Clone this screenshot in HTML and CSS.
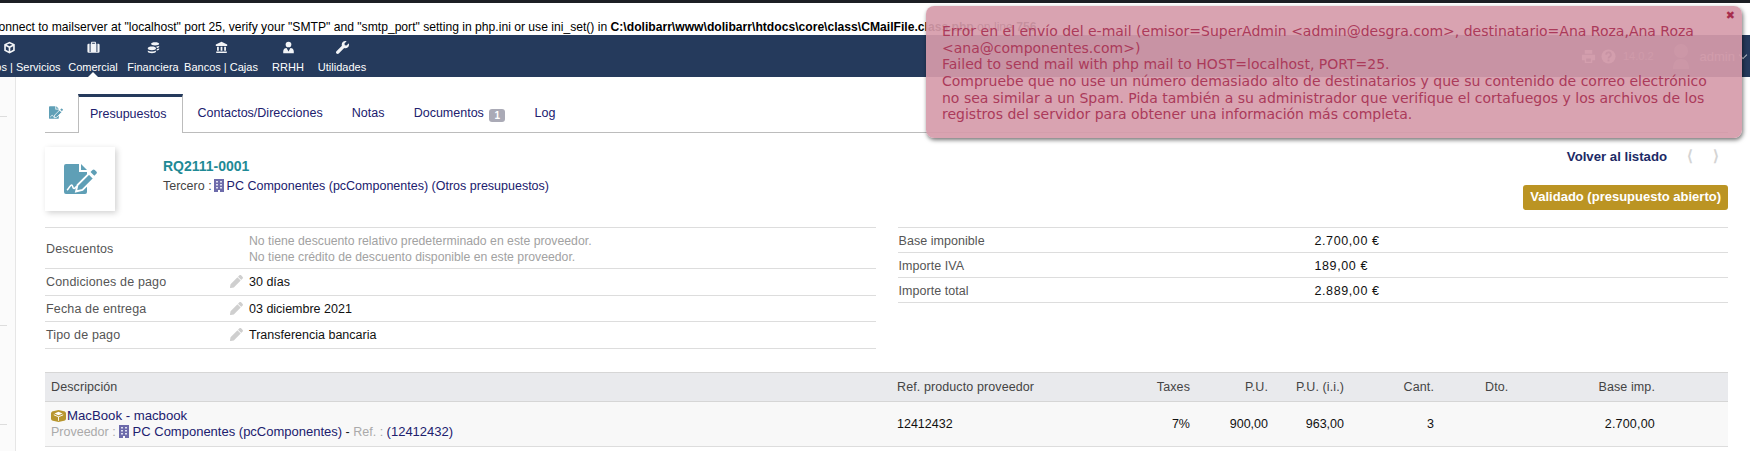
FILE: index.html
```html
<!DOCTYPE html>
<html lang="es">
<head>
<meta charset="utf-8">
<title>RQ2111-0001</title>
<link rel="stylesheet" href="styles.css">
</head>
<body>
<svg class="defs" width="0" height="0" aria-hidden="true">
  <symbol id="i-file" viewBox="0 0 33 30">
    <path fill="currentColor" d="M0 2a2 2 0 0 1 2-2h13v8h8v20a2 2 0 0 1-2 2H2a2 2 0 0 1-2-2z"/>
    <path fill="currentColor" d="M17 0l6 6h-6z"/>
    <path fill="none" stroke="#fff" stroke-width="1.6" d="M3 26c2-1 3-5 4.500-5s1 3.500 2.500 3.500 1.500-2 3-2 1.500 2 4 2"/>
    <path fill="currentColor" stroke="#fff" stroke-width="1.800" d="M12 27.500l1.500-6.500L25 9.500l5 5-11.500 11.500z"/>
    <path fill="currentColor" d="M26.500 8l2-2a1.600 1.600 0 0 1 2.300 0l1.500 1.500a1.600 1.600 0 0 1 0 2.300l-2 2z"/>
  </symbol>
  <symbol id="i-build" viewBox="0 0 10 13">
    <path fill="currentColor" d="M0 0h10v13H6v-2H4v2H0z"/>
    <path fill="#dfe0f0" d="M2 2h2v1.500H2zM6 2h2v1.500H6zM2 5h2v1.500H2zM6 5h2v1.500H6zM2 8h2v1.500H2zM6 8h2v1.500H6z"/>
  </symbol>
  <symbol id="i-pencil" viewBox="0 0 512 512">
    <path fill="currentColor" d="M497.900 142.100l-46.100 46.100c-4.700 4.700-12.300 4.700-17 0l-111-111c-4.700-4.700-4.700-12.300 0-17l46.100-46.100c18.700-18.700 49.100-18.700 67.900 0l60.100 60.100c18.800 18.700 18.800 49.100 0 67.900zM284.200 99.800L21.600 362.400.4 483.900c-2.900 16.400 11.400 30.600 27.800 27.800l121.500-21.300 262.600-262.600c4.700-4.700 4.700-12.300 0-17l-111-111c-4.800-4.700-12.400-4.700-17.100 0z"/>
  </symbol>
  <symbol id="i-cube" viewBox="0 0 15 12">
    <path fill="currentColor" d="M7.500 0L13 1.200c1.300.3 2 1.300 2 2.300v5c0 1-.7 2-2 2.300L7.500 12 2 10.800C.7 10.500 0 9.500 0 8.500v-5c0-1 .7-2 2-2.300z"/>
    <path fill="#fff" d="M7.500 1.800L11.500 3.500 7.500 5.200 3.500 3.500z"/>
    <path fill="none" stroke="#fff" stroke-width=".9" d="M2.800 4.800L7.500 6.800l4.700-2M7.500 6.800v4"/>
  </symbol>
</svg>

<div class="topline"></div>
<div class="warn">Warning: mail(): Failed to connect to mailserver at "localhost" port 25, verify your "SMTP" and "smtp_port" setting in php.ini or use ini_set() in <b>C:\dolibarr\www\dolibarr\htdocs\core\class\CMailFile.class.php</b> on line <b>756</b></div>

<nav class="topnav">
  <a class="navitem w1"><svg class="navicon" viewBox="0 0 16 16"><path fill="currentColor" d="M8 1l6.500 3v8L8 15.500 1.500 12V4zM8 3L4.500 4.700 8 6.400l3.500-1.700zM3.500 6.500v4.300L7 12.700V8.200zM12.500 6.500L9 8.200v4.500l3.500-1.900z"/></svg><span>Productos | Servicios</span></a>
  <a class="navitem w2 current"><svg class="navicon" viewBox="0 0 16 16"><path fill="currentColor" fill-rule="evenodd" d="M5 3.500V2a1 1 0 0 1 1-1h4a1 1 0 0 1 1 1v1.500h3a1.500 1.500 0 0 1 1.500 1.500v8a1.500 1.500 0 0 1-1.500 1.500H2A1.500 1.500 0 0 1 .5 13V5A1.500 1.500 0 0 1 2 3.500zM6.300 2.300v1.200h3.400V2.300zM3.200 3.500v10h1.200v-10zM11.600 3.500v10h1.200v-10z"/></svg><span>Comercial</span></a>
  <a class="navitem w3"><svg class="navicon" viewBox="0 0 16 16"><path fill="currentColor" d="M1 8.500c0-1 2.300-1.800 5-1.800s5 .8 5 1.800v1c0 1-2.300 1.800-5 1.800s-5-.8-5-1.800zM1 11.800c1 .8 3 1.200 5 1.200s4-.4 5-1.200v1.500c0 1-2.300 1.700-5 1.700s-5-.7-5-1.700zM5 3.500C5 2.300 7.200 1.500 10 1.500s5 .8 5 2-2.200 2-5 2-5-.8-5-2zM11.500 6.700c1.500-.1 2.700-.5 3.500-1v1.300c0 .8-1.300 1.500-3 1.700zM12 9.800c1.300-.2 2.400-.5 3-1v1.500c0 .7-1.200 1.300-3 1.600z"/></svg><span>Financiera</span></a>
  <a class="navitem w4"><svg class="navicon" viewBox="0 0 16 16"><path fill="currentColor" d="M8 1l7 3.200V6H1V4.200zM2.500 7h2.200v5H2.500zM6.900 7h2.200v5H6.900zM11.300 7h2.200v5h-2.200zM1.500 13h13v1.800h-13z"/></svg><span>Bancos | Cajas</span></a>
  <a class="navitem w5"><svg class="navicon" viewBox="0 0 16 16"><circle cx="8" cy="4.300" r="3.500" fill="currentColor"/><path fill="currentColor" d="M1.500 15v-2.500C1.500 10 3.500 8.500 5.600 8.500L8 13l2.400-4.500c2.100 0 4.100 1.500 4.100 4V15z"/></svg><span>RRHH</span></a>
  <a class="navitem w6"><svg class="navicon" viewBox="0 0 512 512"><path fill="currentColor" d="M507.730 109.100c-2.240-9.030-13.540-12.090-20.120-5.510l-74.360 74.360-67.880-11.310-11.310-67.880 74.360-74.360c6.620-6.620 3.430-17.900-5.660-20.160-47.380-11.740-99.550.91-136.580 37.930-39.640 39.640-50.550 97.100-34.050 147.200L18.740 402.760c-24.990 24.990-24.990 65.510 0 90.500 24.990 24.990 65.510 24.990 90.500 0l213.210-213.210c50.120 16.710 107.470 5.680 147.370-34.220 37.070-37.070 49.700-89.320 37.910-136.730z"/></svg><span>Utilidades</span></a>
  <div class="navright">
    <svg class="navmini" viewBox="0 0 16 16"><path fill="currentColor" fill-rule="evenodd" d="M4 1h8v4H4zM1 6h14v6h-3v3H4v-3H1zM5.500 10v3.500h5V10z"/></svg>
    <svg class="navmini" viewBox="0 0 16 16"><circle cx="8" cy="8" r="7.500" fill="currentColor"/><path fill="none" stroke="#253a5c" stroke-width="2" d="M5.500 6a2.500 2.500 0 1 1 3.500 2.300c-.7.300-1 .8-1 1.700"/><path fill="#253a5c" d="M7 11.200h2v2H7z"/></svg>
    <span class="ver">14.0.2</span>
    <svg class="avatar" viewBox="0 0 22 28"><circle cx="11" cy="9" r="7" fill="currentColor"/><path fill="currentColor" d="M3 27c0-7 3-10 8-10s8 3 8 10z"/></svg>
    <span class="user">admin</span>
    <span class="chev"></span>
  </div>
</nav>

<div class="page">
  <aside class="side">
    <i class="tick t1"></i>
    <i class="tick t2"></i>
    <i class="tick t3"></i>
  </aside>
  <main class="content">
    <div class="tabs">
      <svg class="tabicon"><use href="#i-file"/></svg>
      <a class="tab active">Presupuestos</a>
      <a class="tab">Contactos/Direcciones</a>
      <a class="tab">Notas</a>
      <a class="tab">Documentos <span class="count">1</span></a>
      <a class="tab">Log</a>
    </div>

    <section class="head">
      <div class="logobox"><svg class="logoicon"><use href="#i-file"/></svg></div>
      <div class="ident">
        <div class="ref">RQ2111-0001</div>
        <div class="third">Tercero : <svg class="bld tight"><use href="#i-build"/></svg> <a>PC Componentes (pcComponentes)</a> <a>(Otros presupuestos)</a></div>
      </div>
      <div class="headright">
        <div class="backline"><a class="back">Volver al listado</a><span class="pager">&#10216;</span><span class="pager">&#10217;</span></div>
        <span class="status">Validado (presupuesto abierto)</span>
      </div>
    </section>

    <section class="cols">
      <table class="info left">
        <tr class="tall"><td class="lab">Descuentos</td><td class="val muted">No tiene descuento relativo predeterminado en este proveedor.<br>No tiene crédito de descuento disponible en este proveedor.</td></tr>
        <tr class="r27"><td class="lab">Condiciones de pago</td><td class="val"><svg class="pen"><use href="#i-pencil"/></svg>30 días</td></tr>
        <tr><td class="lab">Fecha de entrega</td><td class="val"><svg class="pen"><use href="#i-pencil"/></svg>03 diciembre 2021</td></tr>
        <tr class="r27"><td class="lab">Tipo de pago</td><td class="val"><svg class="pen"><use href="#i-pencil"/></svg>Transferencia bancaria</td></tr>
      </table>
      <table class="info right">
        <tr><td class="lab2">Base imponible</td><td class="amt">2.700,00 €</td></tr>
        <tr><td class="lab2">Importe IVA</td><td class="amt">189,00 €</td></tr>
        <tr><td class="lab2">Importe total</td><td class="amt">2.889,00 €</td></tr>
      </table>
    </section>

    <table class="lines">
      <thead>
        <tr>
          <th class="c-desc">Descripción</th>
          <th class="c-ref">Ref. producto proveedor</th>
          <th class="c-tax num">Taxes</th>
          <th class="c-pu num">P.U.</th>
          <th class="c-pui num">P.U. (i.i.)</th>
          <th class="c-qty num">Cant.</th>
          <th class="c-dto">Dto.</th>
          <th class="c-base num">Base imp.</th>
          <th class="c-end"></th>
        </tr>
      </thead>
      <tbody>
        <tr>
          <td class="c-desc">
            <div><svg class="cube"><use href="#i-cube"/></svg><a class="prod">MacBook - macbook</a></div>
            <div><span class="faint">Proveedor : </span><svg class="bld"><use href="#i-build"/></svg> <a class="sup">PC Componentes (pcComponentes)</a> - <span class="faint">Ref. : </span><a class="sup">(12412432)</a></div>
          </td>
          <td class="c-ref">12412432</td>
          <td class="c-tax num">7%</td>
          <td class="c-pu num">900,00</td>
          <td class="c-pui num">963,00</td>
          <td class="c-qty num">3</td>
          <td class="c-dto"></td>
          <td class="c-base num amt2">2.700,00</td>
          <td class="c-end"></td>
        </tr>
      </tbody>
    </table>
  </main>
</div>

<div class="alert" role="alert">
  <span class="close">&#10006;</span>
  Error en el envío del e-mail (emisor=SuperAdmin &lt;admin@desgra.com&gt;, destinatario=Ana Roza,Ana Roza &lt;ana@componentes.com&gt;)<br>
  Failed to send mail with php mail to HOST=localhost, PORT=25.<br>
  Compruebe que no use un número demasiado alto de destinatarios y que su contenido de correo electrónico no sea similar a un Spam. Pida también a su administrador que verifique el cortafuegos y los archivos de los registros del servidor para obtener una información más completa.
</div>
</body>
</html>
```

FILE: styles.css
```css
* { box-sizing: border-box; }
html, body { margin: 0; height: 451px; overflow: hidden; background: #fff; }
body { font-family: "Liberation Sans", Arial, sans-serif; font-size: 12.5px; color: #222; }
.defs { position: absolute; }
a { color: #20206e; }

.topline { height: 3px; background: #1c1f24; }
.warn { height: 32px; padding-top: 16px; margin-left: -146px; font-size: 12.13px; line-height: 16px; white-space: nowrap; color: #000; }

.topnav { display: flex; height: 42px; background: #253a5c; color: #fff; overflow: hidden; }
.navitem { position: relative; display: flex; flex: none; flex-direction: column; align-items: center; color: #fff; font-size: 11px; white-space: nowrap; padding-top: 6px; }
.navicon { width: 13px; height: 13px; margin-bottom: 7px; color: #f2f4f7; }
.w1 { width: 102px; margin-left: -42px; }
.w2 { width: 66px; }
.w3 { width: 54px; }
.w4 { width: 82px; }
.w5 { width: 52px; }
.w6 { width: 56px; }
.current::after { content: ""; position: absolute; left: 50%; bottom: 0; margin-left: -5px; border: 5px solid transparent; border-top: 0; border-bottom-color: #fff; }
.navright { display: flex; align-items: center; margin-left: auto; color: #fff; font-size: 11px; padding-right: 4px; }
.navmini { width: 15px; height: 15px; margin-right: 5px; opacity: .65; }
.ver { margin: 0 16px 0 2px; opacity: .4; }
.avatar { width: 22px; height: 28px; margin-right: 8px; opacity: .25; }
.user { font-size: 13px; opacity: .55; }
.chev { width: 6px; height: 6px; margin: 0 0 3px 5px; border: solid #fff; border-width: 0 1px 1px 0; transform: rotate(45deg); opacity: .7; }

.page { display: flex; height: 374px; }
.side { position: relative; flex: none; width: 16px; background: #fbfbfb; border-right: 1px solid #e6e6e6; }
.tick { position: absolute; left: 0; width: 7px; height: 1px; background: #ddd; }
.t1 { top: 39px; }
.t2 { top: 248px; }
.t3 { top: 347px; }

.content { flex: 1; min-width: 0; padding: 17px 22px 0 29px; }

.tabs { display: flex; align-items: flex-end; height: 39px; border-bottom: 1px solid #bcbcbc; }
.tabicon { width: 14px; height: 13px; margin: 0 15px 13px 4px; color: #5f9fb6; }
.tab { padding: 0 14.6px; height: 38px; line-height: 38px; white-space: nowrap; }
.tab.active { width: 105px; margin: 0 0 -1px 0; height: 39px; padding: 0 11px; border: solid #bcbcbc; border-width: 3px 1px 0; border-top-color: #253a5c; background: #fff; line-height: 35px; }
.count { display: inline-block; min-width: 16px; height: 13px; margin-left: 2px; border-radius: 3px; background: #aaaab6; color: #fff; font-size: 10px; font-weight: bold; line-height: 13px; text-align: center; vertical-align: -2px; }

.head { display: flex; height: 64px; margin-top: 14px; }
.logobox { display: flex; flex: none; width: 70px; height: 64px; align-items: center; justify-content: center; background: #fff; box-shadow: 2px 2px 6px rgba(0,0,0,.18); }
.logoicon { width: 33px; height: 30px; color: #5f9fb6; }
.ident { margin-left: 48px; padding-top: 11px; }
.ref { font-size: 14px; font-weight: bold; line-height: 16px; color: #1f8a96; }
.third { margin-top: 4px; line-height: 16px; color: #444; }
.bld { width: 10px; height: 13px; color: #6d6bab; vertical-align: -2px; }
.bld.tight { margin: 0 -1px; }
.headright { display: flex; flex: 1; flex-direction: column; align-items: flex-end; padding-top: 1px; }
.backline { display: flex; align-items: center; height: 16px; margin: 0 9px 21px 0; }
.back { font-size: 13.2px; font-weight: bold; color: #1c2a66; }
.pager { width: 26px; text-align: right; font-size: 15px; font-weight: bold; color: #d4d4d4; }
.status { height: 25px; padding: 0 7px; border-radius: 3px; background: #bb9423; color: #fff; font-size: 13px; font-weight: bold; line-height: 24px; }

.cols { display: flex; align-items: flex-start; gap: 22px; margin-top: 16px; }
.info { flex: 1; border-collapse: collapse; border-top: 1px solid #ddd; }
.info td { padding: 0; border-bottom: 1px solid #ddd; }
.info.left tr { height: 26px; }
.info.left tr.r27 { height: 27px; }
.info.left tr.tall { height: 41px; }
.info.left tr.tall td { padding-top: 1px; }
.info.right tr { height: 25px; }
.info.right td { padding-top: 1px; }
.lab { width: 185px; padding-left: 1px !important; color: #555; letter-spacing: .15px; }
.info.right .lab2 { width: 417px; padding-left: 1px; color: #555; letter-spacing: .05px; }
.amt { color: #111; letter-spacing: .6px; }
.val { color: #111; }
.muted { font-size: 12.25px; line-height: 16px; }
.info.left .val.muted { color: #a2a2a2; }
.pen { width: 13px; height: 13px; margin: 0 6px -2px -19px; color: #cfcfcf; }
.info.left .val { padding-left: 19px; }

.lines { width: 100%; margin-top: 23px; border-collapse: collapse; table-layout: fixed; }
.lines th { height: 29px; padding: 0; background: #e9eaed; border-top: 1px solid #d6d6d6; border-bottom: 1px solid #d6d6d6; color: #444; font-weight: normal; letter-spacing: .1px; text-align: left; }
.lines td { height: 45px; padding: 0; background: #f8f8f8; border-bottom: 1px solid #ddd; color: #111; line-height: 16px; }
.lines .num { text-align: right; }
.lines .c-desc { width: 852px; padding-left: 6px; }
.lines .c-ref { width: 209px; }
.c-tax { width: 84px; }
.c-pu { width: 78px; }
.c-pui { width: 76px; }
.c-qty { width: 90px; }
.lines .c-dto { width: 74px; padding-left: 51px; overflow: visible; }
.c-base { width: 147px; }
.amt2 { letter-spacing: .2px; }
.prod { font-size: 13.2px; }
.sup { font-size: 13px; }
.faint { color: #aaa; }
.cube { width: 15px; height: 12px; margin-right: 1px; color: #b8962e; vertical-align: -2px; }

.alert { position: absolute; top: 6px; left: 926px; width: 816px; height: 132px; padding: 17px 16px 0; border-radius: 8px; background: rgba(214,155,170,.92); box-shadow: 1px 2px 4px rgba(0,0,0,.55); color: #ab3a5a; font-family: "DejaVu Sans", Verdana, sans-serif; font-size: 14px; line-height: 16.67px; }
.close { position: absolute; top: 2px; right: 7px; font-size: 11px; color: #a72c4d; }
```
